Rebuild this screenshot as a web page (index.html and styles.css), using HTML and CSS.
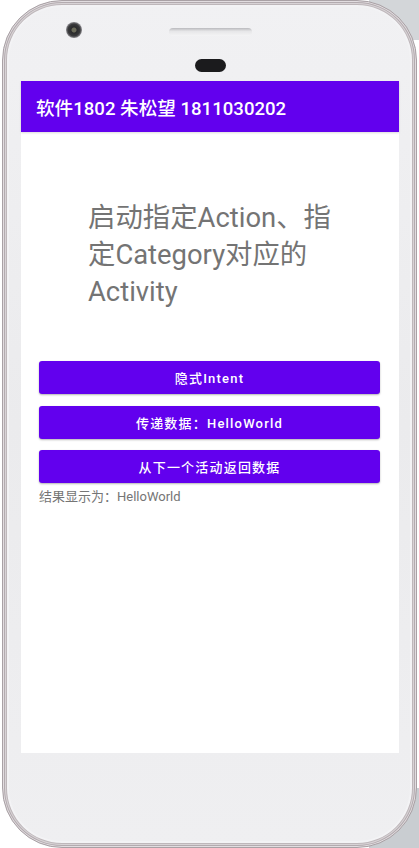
FILE: index.html
```html
<!DOCTYPE html>
<html lang="zh-CN">
<head>
<meta charset="utf-8">
<title>Intent Demo</title>
<link rel="stylesheet" href="styles.css">
</head>
<body>
<div class="phone">
  <div class="bezel-top">
    <span class="camera"></span>
    <span class="speaker"></span>
    <span class="sensor"></span>
  </div>
  <div class="screen">
    <div class="toolbar">软件1802 朱松望 1811030202</div>
    <div class="content">
      <p class="heading">启动指定Action、指<br>定Category对应的<br>Activity</p>
      <div class="buttons">
        <button class="btn">隐式Intent</button>
        <button class="btn">传递数据：HelloWorld</button>
        <button class="btn">从下一个活动返回数据</button>
      </div>
      <p class="result">结果显示为：HelloWorld</p>
    </div>
  </div>
</div>
</body>
</html>
```
FILE: styles.css
```css
html, body {
  margin: 0;
  padding: 0;
  height: 100%;
}
body {
  background:
    linear-gradient(#c9cdd1, #c9cdd1) right bottom / 50px 60px no-repeat,
    linear-gradient(#d3d6d9, #d3d6d9) right top / 50px 40px no-repeat,
    #ffffff;
  font-family: Roboto, "Noto Sans CJK SC", sans-serif;
  overflow: hidden;
}
.phone {
  box-sizing: border-box;
  margin-left: 2px;
  width: 415px;
  height: 848px;
  border-radius: 60px;
  background: linear-gradient(180deg, #f1f1f3 0%, #ebebed 50%, #efeff1 100%);
  border: 1px solid #a9a1a5;
  box-shadow:
    inset 0 0 0 1px #e2dde0,
    inset 0 0 0 2px #b3abaf,
    inset 0 0 0 3px #d8d3d6,
    inset 0 0 0 4px #beb7ba,
    inset 0 0 0 6px #f3f3f5;
  padding-left: 18px;
  display: flex;
  flex-direction: column;
}
.bezel-top {
  position: relative;
  height: 80px;
  flex: none;
}
.camera {
  position: absolute;
  left: 45px;
  top: 21px;
  width: 16px;
  height: 16px;
  border-radius: 50%;
  background: radial-gradient(circle at 50% 50%, #6b6b5a 0 2px, #2a2a2c 3px, #3a3a3c 6px, #8d8c90 8px);
}
.speaker {
  position: absolute;
  left: 148px;
  top: 27px;
  width: 83px;
  height: 8px;
  border-radius: 4px;
  background: linear-gradient(180deg, #b9b9bd 0%, #e6e6e8 40%, #f4f4f5 100%);
}
.sensor {
  position: absolute;
  left: 174px;
  top: 58px;
  width: 31px;
  height: 13px;
  border-radius: 7px;
  background: #1b1b1d;
}
.screen {
  width: 378px;
  height: 672px;
  background: #ffffff;
  flex: none;
  display: flex;
  flex-direction: column;
}
.toolbar {
  height: 51px;
  flex: none;
  background: #6200ee;
  color: #ffffff;
  font-size: 18.6px;
  font-weight: 500;
  display: flex;
  align-items: center;
  padding-left: 15px;
  box-shadow: 0 1px 2px rgba(0, 0, 0, 0.15);
}
.content {
  display: flex;
  flex-direction: column;
}
.heading {
  margin: 68px 0 0 67px;
  font-size: 27.4px;
  line-height: 37px;
  color: #747474;
  font-weight: 400;
}
.buttons {
  margin: 50px 19px 0 18px;
  display: flex;
  flex-direction: column;
  gap: 11.5px;
}
.btn {
  height: 33px;
  border: none;
  border-radius: 3px;
  background: #6200ee;
  color: #ffffff;
  font-family: Roboto, "Noto Sans CJK SC", sans-serif;
  font-size: 13px;
  font-weight: 500;
  letter-spacing: 1.2px;
  box-shadow: 0 1px 2px rgba(0, 0, 0, 0.3);
  padding: 0;
}
.result {
  margin: 5px 0 0 18px;
  font-size: 13px;
  line-height: 17px;
  color: #757575;
}
```
